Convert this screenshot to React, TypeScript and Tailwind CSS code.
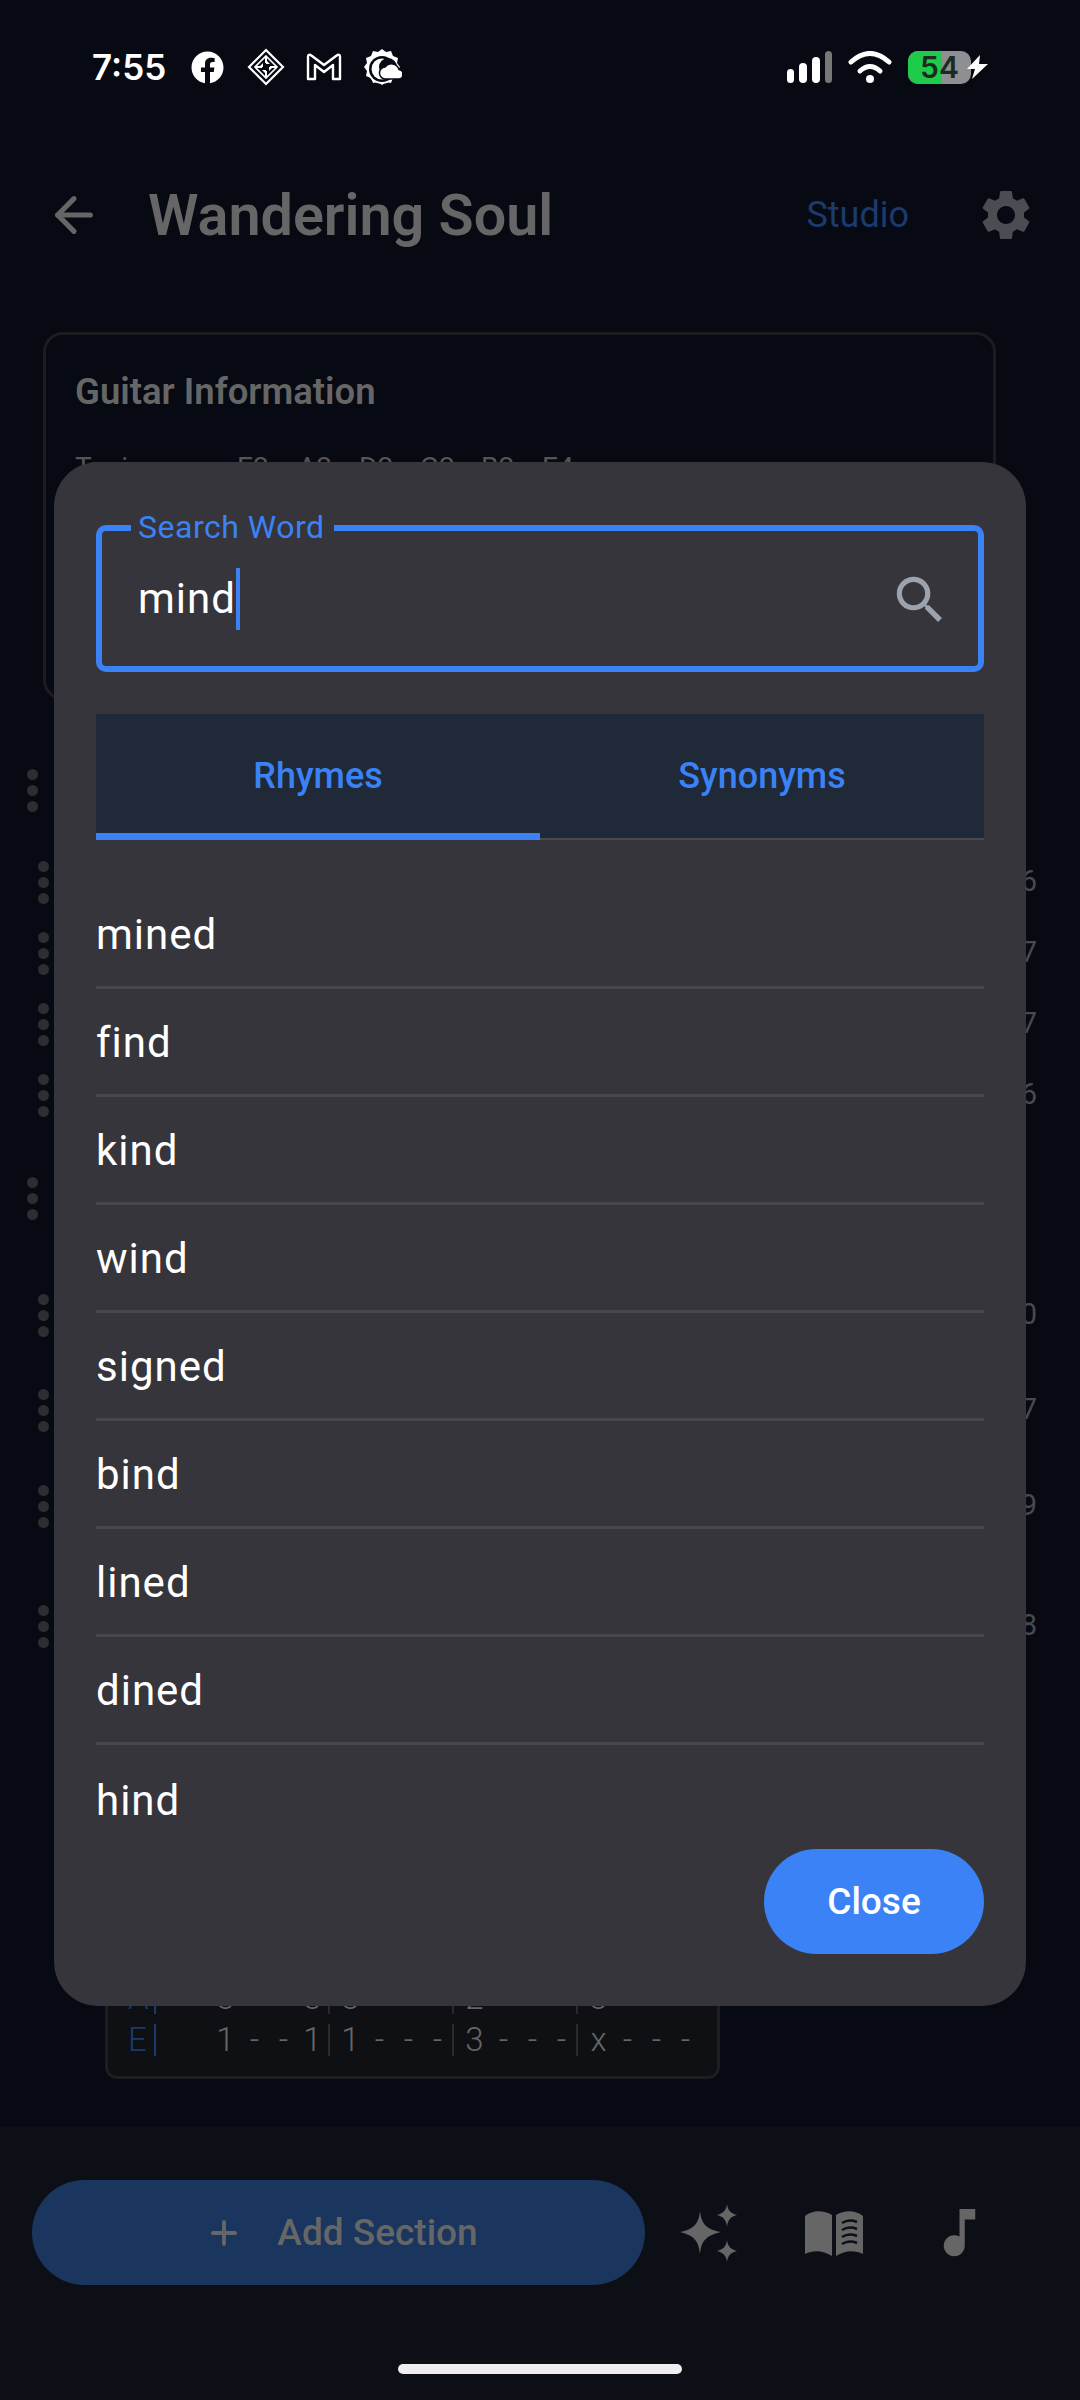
import React from 'react';
import { ArrowLeft, Plus } from 'lucide-react';
import { FaFacebook } from 'react-icons/fa';
import { MdSearch, MdSettings, MdMusicNote } from 'react-icons/md';

const DiamondIcon = () => (
  <svg width="38" height="38" viewBox="0 0 38 38" fill="none" stroke="#fff" strokeWidth="2.2">
    <path d="M19 2 36 19 19 36 2 19Z" />
    <path d="M19 8 30 19 19 30 8 19Z" strokeWidth="1.6" />
    <path d="M19 8v7M19 23v7M8 19h7M23 19h7" strokeWidth="2" />
    <path d="M19 12l4 4h-4zM19 26l-4-4h4zM12 19l4-4v4zM26 19l-4 4v-4z" fill="#fff" stroke="none" />
  </svg>
);

const GmailIcon = () => (
  <svg width="36" height="28" viewBox="0 0 36 28" fill="none" stroke="#fff" strokeWidth="2.4" strokeLinejoin="round">
    <path d="M2 3.5C2 2 3.5 1.2 5 2.2L18 12 31 2.2C32.5 1.2 34 2 34 3.5V26H27V12L18 19 9 12V26H2Z" />
  </svg>
);

const WeatherIcon = () => (
  <svg width="40" height="40" viewBox="0 0 40 40">
    <path
      fill="#fff"
      d="M20 0l4 3 5-1 2 5 5 2-1 5 3 4-3 4 1 5-5 2-2 5-5-1-4 3-4-3-5 1-2-5-5-2 1-5-3-4 3-4-1-5 5-2 2-5 5 1z"
    />
    <circle cx="20" cy="20" r="15" fill="#fff" />
    <circle cx="20" cy="20" r="13" fill="#070a12" />
    <circle cx="20" cy="20" r="10.500" fill="#fff" />
    <circle cx="26" cy="18" r="9" fill="#070a12" />
    <path
      fill="#fff"
      stroke="#070a12"
      strokeWidth="1.500"
      d="M24 30a6 6 0 0 1-1-12 8 8 0 0 1 14 2.500 4.800 4.800 0 0 1 0 9.500z"
    />
  </svg>
);

const WifiIcon = () => (
  <svg width="44" height="32" viewBox="0 0 44 32" fill="none" stroke="#fff" strokeWidth="5" strokeLinecap="round">
    <path d="M3 11Q22-6 41 11" />
    <path d="M12 20Q22 11 32 20" />
    <circle cx="22" cy="28" r="4" fill="#fff" stroke="none" />
  </svg>
);

const BoltIcon = () => (
  <svg width="21" height="24" viewBox="0 0 21 24" fill="#fff">
    <path d="M13 0 0 14h8l-3 10L21 9h-9z" />
  </svg>
);

const SparklesIcon = () => (
  <svg width="58" height="58" viewBox="0 0 58 58" fill="#666">
    <path d="M20 7C21.500 19 25 25 41 28 25 32 21.500 37 20 50 18.500 37 15 32 0 28 15 25 18.500 19 20 7Z" />
    <path d="M47 0C47.800 6 50 9 57 11 50 13 47.800 16 47 23 46.200 16 44 13 37 11 44 9 46.200 6 47 0Z" />
    <path d="M47 36C47.800 42 50 45 57 47 50 49 47.800 52 47 58 46.200 52 44 49 37 47 44 45 46.200 42 47 36Z" />
  </svg>
);

const BookIcon = () => (
  <svg width="58" height="46" viewBox="0 0 58 46" fill="#666">
    <path d="M0 6C8 0 18 0 27 5V46C18 40 8 40 0 44Z" />
    <path d="M31 5C40 0 50 0 58 6V44C50 40 40 40 31 46Z" />
    <path
      d="M37 13C42 10 47 10 52 12M37 20C42 17 47 17 52 19M37 27C42 24 47 24 52 26M37 34C42 31 47 31 52 33"
      fill="none"
      stroke="#0c0f16"
      strokeWidth="2.500"
    />
  </svg>
);

const Dots = () => (
  <div className="flex flex-col gap-[5px]">
    <span className="w-[11px] h-[11px] rounded-full bg-[#2d2e31]" />
    <span className="w-[11px] h-[11px] rounded-full bg-[#2d2e31]" />
    <span className="w-[11px] h-[11px] rounded-full bg-[#2d2e31]" />
  </div>
);

const sections = [
  { cls: 'mt-[65px] pl-[27px]', num: '' },
  { cls: 'mt-[42px] pl-[38px]', num: '6' },
  { cls: 'mt-[21px] pl-[38px]', num: '7' },
  { cls: 'mt-[21px] pl-[38px]', num: '7' },
  { cls: 'mt-[21px] pl-[38px]', num: '6' },
  { cls: 'mt-[53px] pl-[27px]', num: '' },
  { cls: 'mt-[67px] pl-[38px]', num: '0' },
  { cls: 'mt-[45px] pl-[38px]', num: '7' },
  { cls: 'mt-[46px] pl-[38px]', num: '9' },
  { cls: 'mt-[70px] pl-[38px]', num: '8' }
];

const tabRows = [
  { label: 'A', bars: ['3  3', '3   ', '2   ', '3   '] },
  { label: 'E', bars: ['1--1', '1---', '3---', 'x---'] }
];

const words = ['mined', 'find', 'kind', 'wind', 'signed', 'bind', 'lined', 'dined', 'hind'];

const tuning = ['E2', 'A2', 'D2', 'G2', 'B2', 'E4'];

const TabCells = ({ value }: { value: string }) => (
  <>
    {value.split('').map((ch, i) => (
      <span key={i} className="w-[29px] text-center">{ch}</span>
    ))}
  </>
);

const StatusBar = () => (
  <div className="h-[132px] shrink-0 flex items-center justify-between pt-[2px] pl-[92px] pr-[92px]">
    <div className="flex items-center">
      <span className="text-[35px] font-semibold text-white font-['Inter',sans-serif] w-[99px]">7:55</span>
      <FaFacebook className="text-white" size={33} />
      <div className="ml-[23px]"><DiamondIcon /></div>
      <div className="ml-[21px]"><GmailIcon /></div>
      <div className="ml-[20px] mt-[3px]"><WeatherIcon /></div>
    </div>
    <div className="flex items-center">
      <div className="flex items-end gap-[5px] h-[32px]">
        <span className="w-[7px] h-[14px] rounded-full bg-white" />
        <span className="w-[8px] h-[20px] rounded-full bg-white" />
        <span className="w-[8px] h-[26px] rounded-full bg-white" />
        <span className="w-[7px] h-[32px] rounded-full bg-[#777]" />
      </div>
      <div className="ml-[16px]"><WifiIcon /></div>
      <div className="ml-[16px] relative w-[63px] h-[33px] rounded-[10px] bg-[#8e8e93] overflow-hidden flex items-center justify-center">
        <span className="absolute left-0 top-0 h-full w-[34px] bg-[#1fcb4a]" />
        <span className="relative text-[30px] leading-none font-semibold text-[#1b2b20] font-['Inter',sans-serif]">54</span>
      </div>
      <div className="-ml-[4px] relative"><BoltIcon /></div>
    </div>
  </div>
);

const SearchDialog = () => (
  <div className="absolute left-[54px] top-[462px] w-[972px] h-[1544px] rounded-[44px] bg-[#36353b] flex flex-col px-[42px] pt-[63px] pb-[52px] font-['Roboto',sans-serif]">
    <div className="relative h-[147px] shrink-0 rounded-[10px] border-[6px] border-[#3b82f6] flex items-center justify-between pl-[36px] pr-[27px]">
      <span className="absolute left-[29px] -top-[22px] bg-[#36353b] pl-[7px] pr-[10px] text-[32px] leading-[36px] tracking-[0.5px] text-[#3b82f6]">
        Search Word
      </span>
      <div className="flex items-center">
        <span className="text-[42px] tracking-[1px] text-white">mind</span>
        <span className="w-[4px] h-[62px] bg-[#3b82f6]" />
      </div>
      <MdSearch className="text-[#9ca3af] mt-[2px]" size={62} />
    </div>

    <div className="mt-[42px] h-[126px] shrink-0 flex bg-[#1f2937] border-b-[2px] border-[#4b4950]">
      <div className="relative flex-1 flex items-center justify-center">
        <span className="text-[36px] font-medium text-[#3b82f6]">Rhymes</span>
        <span className="absolute left-0 right-0 -bottom-[2px] h-[7px] bg-[#3b82f6]" />
      </div>
      <div className="flex-1 flex items-center justify-center">
        <span className="text-[36px] font-medium text-[#3b82f6]">Synonyms</span>
      </div>
    </div>

    <div className="mt-[41px] flex-1 min-h-0 overflow-hidden">
      {words.map((word) => (
        <div key={word} className="h-[108px] flex items-center pt-[2px] border-b-[3px] border-[#48474d] last:border-b-0">
          <span className="text-[42px] tracking-[1px] text-white">{word}</span>
        </div>
      ))}
    </div>

    <div className="flex justify-end shrink-0">
      <button className="w-[220px] h-[105px] rounded-full bg-[#3b82f6] text-[37px] font-medium text-white">Close</button>
    </div>
  </div>
);

export default function App() {
  return (
    <div className="relative w-[1080px] h-[2400px] bg-[#070a12] overflow-hidden flex flex-col font-['Roboto',sans-serif]">
      <StatusBar />

      <div className="h-[166px] shrink-0 flex items-center pl-[46px] pr-[44px]">
        <ArrowLeft className="text-[#666]" size={56} strokeWidth={2.2} />
        <h1 className="ml-[46px] mt-[2px] text-[57.5px] font-semibold text-[#666]">Wandering Soul</h1>
        <span className="ml-auto text-[36px] text-[#1c3a6e]">Studio</span>
        <MdSettings className="ml-[67px] text-[#4a4d52]" size={60} />
      </div>

      <div className="mt-[34px] ml-[43px] w-[953px] h-[368px] shrink-0 rounded-[20px] border-[3px] border-[#1d1d21] pl-[29px] pt-[37px]">
        <h2 className="text-[36.5px] leading-[40px] font-semibold text-[#666]">Guitar Information</h2>
        <div className="mt-[35px] flex text-[28px] text-[#555]">
          <span className="w-[162px]">Tuning:</span>
          {tuning.map((note, i) => (
            <span key={i} className="w-[61px]">{note}</span>
          ))}
        </div>
      </div>

      <div className="flex-1 min-h-0 flex flex-col pb-[48px]">
        {sections.map((row, i) => (
          <div key={i} className={`${row.cls} h-[50px] shrink-0 flex items-center justify-between pr-[43px]`}>
            <Dots />
            <span className="text-[29px] text-[#4a4a4e]">{row.num}</span>
          </div>
        ))}

        <div className="mt-auto ml-[105px] w-[615px] rounded-[12px] border-[3px] border-[#1d1e22] bg-[#0e1014] pl-[20px] pb-[20px] flex flex-col gap-[10px] text-[33px] leading-[32px] font-light text-[#666]">
          {tabRows.map((row) => (
            <div key={row.label} className="flex h-[32px]">
              <span className="w-[26px] text-[#1c3a6e]">{row.label}</span>
              <span className="w-[2px] bg-[#1c3a6e]" />
              <div className="ml-[55px] flex">
                <div className="w-[119px] flex border-r-[2px] border-[#2a2b2e]"><TabCells value={row.bars[0]} /></div>
                <div className="w-[124px] pl-[6px] flex border-r-[2px] border-[#2a2b2e]"><TabCells value={row.bars[1]} /></div>
                <div className="w-[124px] pl-[6px] flex border-r-[2px] border-[#2a2b2e]"><TabCells value={row.bars[2]} /></div>
                <div className="w-[124px] pl-[6px] flex"><TabCells value={row.bars[3]} /></div>
              </div>
            </div>
          ))}
        </div>
      </div>

      <div className="h-[273px] shrink-0 bg-[#0c0f16] flex flex-col pt-[53px]">
        <div className="flex items-center pl-[32px]">
          <button className="w-[613px] h-[105px] rounded-full bg-[#1a365f] flex items-center justify-center gap-[34px] pl-[6px] text-[37px] font-medium text-[#666]">
            <Plus size={38} strokeWidth={2.4} />
            <span>Add Section</span>
          </button>
          <div className="ml-[35px]"><SparklesIcon /></div>
          <div className="ml-[67px]"><BookIcon /></div>
          <MdMusicNote className="ml-[65px] text-[#666]" size={63} />
        </div>
        <div className="mt-[79px] mx-auto w-[284px] h-[10px] rounded-full bg-[#eeeeee]" />
      </div>

      <SearchDialog />
    </div>
  );
}
